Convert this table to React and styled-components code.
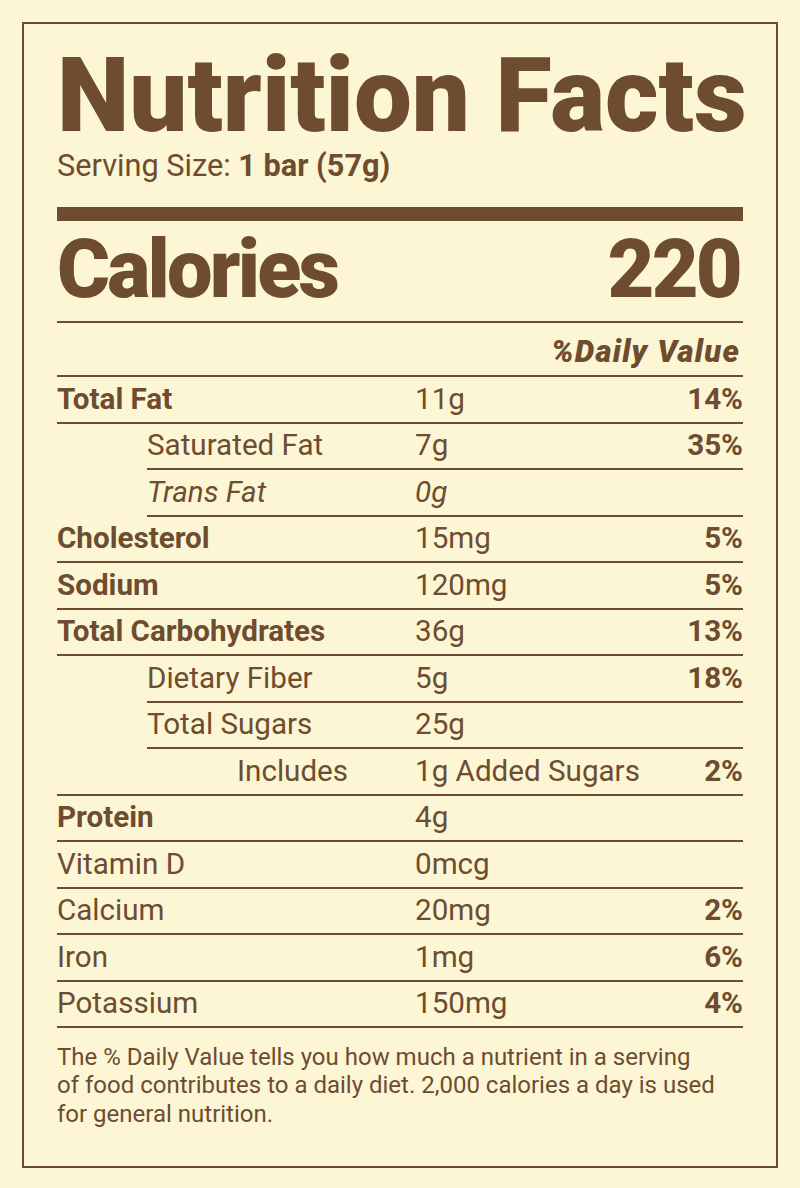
import styled, { createGlobalStyle } from "styled-components";

const brown = "#6d4c30";
const cream = "#fdf6d4";

const nutrients = [
  { label: "Total Fat", amount: "11g", dv: "14%", bold: true },
  { label: "Saturated Fat", amount: "7g", dv: "35%", indent: 90, inset: 90 },
  { label: "Trans Fat", amount: "0g", italic: true, indent: 90, inset: 90 },
  { label: "Cholesterol", amount: "15mg", dv: "5%", bold: true },
  { label: "Sodium", amount: "120mg", dv: "5%", bold: true },
  { label: "Total Carbohydrates", amount: "36g", dv: "13%", bold: true },
  { label: "Dietary Fiber", amount: "5g", dv: "18%", indent: 90, inset: 90 },
  { label: "Total Sugars", amount: "25g", indent: 90, inset: 90 },
  { label: "Includes", amount: "1g Added Sugars", dv: "2%", indent: 180 },
  { label: "Protein", amount: "4g", bold: true },
  { label: "Vitamin D", amount: "0mcg" },
  { label: "Calcium", amount: "20mg", dv: "2%" },
  { label: "Iron", amount: "1mg", dv: "6%" },
  { label: "Potassium", amount: "150mg", dv: "4%" },
];

export default function App() {
  return (
    <>
      <GlobalStyle />
      <Label>
        <Title>Nutrition Facts</Title>
        <Serving>
          Serving Size: <strong>1 bar (57g)</strong>
        </Serving>
        <ThickBar />
        <CaloriesRow>
          <span>Calories</span>
          <span>220</span>
        </CaloriesRow>
        <DailyHeader>%Daily Value</DailyHeader>
        {nutrients.map((n) => (
          <Row key={n.label} $inset={n.inset || 0}>
            <Name
              $bold={n.bold}
              $italic={n.italic}
              $pad={(n.indent || 0) - (n.inset || 0)}
            >
              {n.label}
            </Name>
            <Amount $italic={n.italic}>{n.amount}</Amount>
            <Percent>{n.dv}</Percent>
          </Row>
        ))}
        <Footnote>
          The % Daily Value tells you how much a nutrient in a serving
          <br />
          of food contributes to a daily diet. 2,000 calories a day is used
          <br />
          for general nutrition.
        </Footnote>
      </Label>
    </>
  );
}

const GlobalStyle = createGlobalStyle`
  body {
    margin: 0;
    background: ${cream};
    font-family: Roboto, "Liberation Sans", sans-serif;
    color: ${brown};
  }
`;

const Label = styled.main`
  margin: 22px;
  border: 2px solid ${brown};
  padding: 19px 33px 38px;
  display: flex;
  flex-direction: column;
`;

const Title = styled.h1`
  margin: 0;
  font-size: 103px;
  line-height: 105px;
  font-weight: 900;
  letter-spacing: 0;
  white-space: nowrap;
`;

const Serving = styled.p`
  margin: 3px 0 0;
  font-size: 30.7px;
  line-height: 30px;
  strong {
    font-weight: 700;
  }
`;

const ThickBar = styled.div`
  margin-top: 26px;
  height: 14px;
  background: ${brown};
`;

const CaloriesRow = styled.div`
  display: flex;
  justify-content: space-between;
  padding: 8px 3px 10px 0;
  border-bottom: 2px solid ${brown};
  font-size: 81px;
  line-height: 82px;
  font-weight: 900;
  letter-spacing: -2.8px;
`;

const DailyHeader = styled.div`
  padding: 15px 3px 9px 0;
  border-bottom: 2px solid ${brown};
  text-align: right;
  font-size: 31px;
  line-height: 28px;
  font-weight: 900;
  font-style: italic;
  letter-spacing: 1.2px;
`;

const Row = styled.div`
  display: grid;
  grid-template-columns: ${(p) => 358 - p.$inset}px 1fr auto;
  align-items: center;
  height: 44.5px;
  margin-left: ${(p) => p.$inset}px;
  border-bottom: 2px solid ${brown};
  font-size: 29.6px;
  line-height: 33px;
`;

const Name = styled.span`
  padding-left: ${(p) => p.$pad}px;
  font-weight: ${(p) => (p.$bold ? 700 : 400)};
  font-style: ${(p) => (p.$italic ? "italic" : "normal")};
`;

const Amount = styled.span`
  font-style: ${(p) => (p.$italic ? "italic" : "normal")};
`;

const Percent = styled.span`
  font-weight: 700;
  text-align: right;
`;

const Footnote = styled.p`
  margin: 15px 0 0;
  font-size: 24px;
  line-height: 28.3px;
`;
